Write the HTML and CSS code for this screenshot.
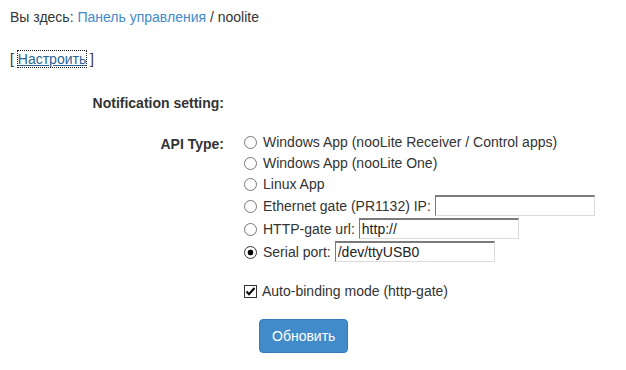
FILE: index.html
```html
<!DOCTYPE html>
<html lang="ru">
<head>
    <meta charset="UTF-8">
    <title>noolite</title>
    <link rel="stylesheet" href="styles.css">
</head>
<body>

    <div class="breadcrumb">
        Вы здесь: <a href="#">Панель управления</a> / noolite
    </div>

    <div class="config-line">
        [ <a href="#" class="config-link">Настроить</a> ]
    </div>

    <form class="settings">
        <div class="form-row">
            <div class="label-col title">Notification setting:</div>
        </div>

        <div class="form-row api">
            <div class="label-col api-label">API Type:</div>
            <div class="options">
                <label class="option short"><input type="radio" name="api" value="0"><span>Windows App (nooLite Receiver / Control apps)</span></label>
                <label class="option short"><input type="radio" name="api" value="1"><span>Windows App (nooLite One)</span></label>
                <label class="option short"><input type="radio" name="api" value="2"><span>Linux App</span></label>
                <label class="option"><input type="radio" name="api" value="3"><span>Ethernet gate (PR1132) IP:</span><input type="text" class="field" value=""></label>
                <label class="option"><input type="radio" name="api" value="4"><span>HTTP-gate url:</span><input type="text" class="field" value="http://"></label>
                <label class="option"><input type="radio" name="api" value="5" checked><span>Serial port:</span><input type="text" class="field" value="/dev/ttyUSB0"></label>

                <label class="check">
                    <span class="check-box">
                        <svg width="13" height="13" viewBox="0 0 13 13">
                            <rect x="0.5" y="0.5" width="12" height="12" fill="#fff" stroke="#333"/>
                            <path d="M2.5 6.5 L5 9.2 L10.5 3" fill="none" stroke="#000" stroke-width="2"/>
                        </svg>
                    </span>
                    <span>Auto-binding mode (http-gate)</span>
                </label>

                <button type="submit" class="btn">Обновить</button>
            </div>
        </div>
    </form>

</body>
</html>
```

FILE: styles.css
```css
body {
    margin: 0;
    font-family: "Liberation Sans", Arial, sans-serif;
    font-size: 14px;
    line-height: 20px;
    color: #333;
    background: #fff;
}

a {
    color: #428bca;
    text-decoration: none;
}

.breadcrumb {
    padding: 7px 10px 0;
}

.config-line {
    margin-top: 22px;
    padding: 0 10px;
}

.config-link {
    color: #2a6496;
    text-decoration: underline;
    outline: 1px dotted #222;
}

.settings {
    margin-top: 24px;
}

.form-row {
    display: flex;
}

.label-col {
    width: 224px;
    text-align: right;
    font-weight: bold;
}

.api {
    margin-top: 18px;
}

.api-label {
    padding-top: 3px;
}

.options {
    margin-left: 20px;
}

.option {
    display: flex;
    align-items: center;
    height: 23px;
    white-space: nowrap;
}

.option.short {
    height: 21px;
}

.option input[type="radio"] {
    appearance: none;
    -webkit-appearance: none;
    width: 13px;
    height: 13px;
    margin: 2px 6px 0 0;
    border: 1px solid #777;
    border-radius: 50%;
    background: #fff;
}

.option input[type="radio"]:checked {
    border-color: #333;
    background: radial-gradient(circle, #000 0, #000 2.6px, #fff 3.2px);
}

.field {
    box-sizing: border-box;
    width: 160px;
    height: 21px;
    margin: 0 0 0 4px;
    padding: 0 2px;
    border-style: solid;
    border-width: 2px 1px 1px 1px;
    border-color: #7b7b7b #dcdcdc #dcdcdc #7b7b7b;
    font-family: "Liberation Sans", Arial, sans-serif;
    font-size: 14px;
    color: #222;
    outline: none;
}

.check {
    display: flex;
    align-items: center;
    height: 22px;
    margin-top: 17px;
}

.check-box {
    display: flex;
    margin: 1px 5px 0 0;
}

.btn {
    margin: 17px 0 0 15px;
    padding: 6px 12px;
    background-color: #428bca;
    border: 1px solid #357ebd;
    border-radius: 4px;
    color: #fff;
    font-family: "Liberation Sans", Arial, sans-serif;
    font-size: 14px;
    line-height: 20px;
    cursor: pointer;
}
```
